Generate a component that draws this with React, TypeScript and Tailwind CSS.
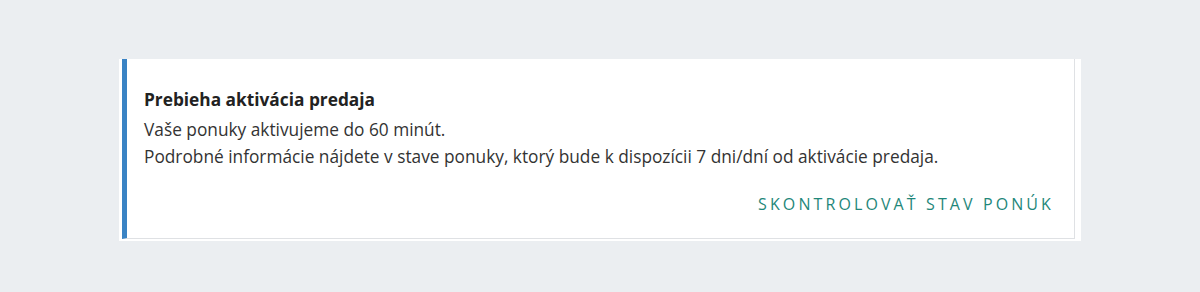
import React from "react";

export default function App() {
  return (
    <div className="w-[1200px] h-[292px] bg-[#ebeef1] pt-[59px] pl-[119px]" style={{ fontFamily: '"Open Sans", sans-serif' }}>
      <div className="w-[962px] h-[182px] bg-white pl-[3px] pt-0 pr-[6px] pb-[2px]">
        <div className="h-full border-l-[5px] border-[#3a83c4] border-r border-b border-r-[#dfe1e4] border-b-[#dfe1e4] pl-[17px] pr-[20px] pt-[29px] flex flex-col">
          <div className="text-[17.3px] font-bold text-[#222] leading-[24px]">Prebieha aktivácia predaja</div>
          <div className="text-[17.3px] text-[#333] leading-[27px] mt-[4px]">
            <div>Vaše ponuky aktivujeme do 60 minút.</div>
            <div>Podrobné informácie nájdete v stave ponuky, ktorý bude k dispozícii 7 dni/dní od aktivácie predaja.</div>
          </div>
          <div className="flex justify-end mt-[23px]">
            <button className="text-[16px] font-medium tracking-[3.1px] text-[#1f877a] leading-[22px]">SKONTROLOVAŤ STAV PONÚK</button>
          </div>
        </div>
      </div>
    </div>
  );
}
